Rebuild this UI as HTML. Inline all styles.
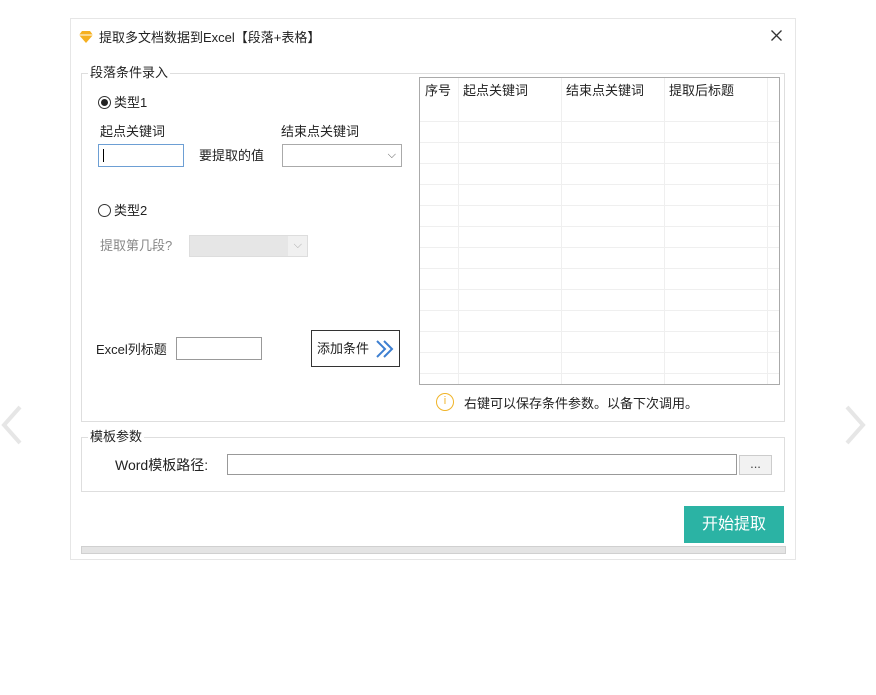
<!DOCTYPE html>
<html><head><meta charset="utf-8"><style>
*{margin:0;padding:0;box-sizing:border-box}
body{width:876px;height:695px;background:#fff;position:relative;overflow:hidden;font-family:"Liberation Sans","Noto Sans CJK SC",sans-serif;font-size:13px;line-height:15px;color:#222}
.a{position:absolute}
.win{left:70px;top:18px;width:726px;height:542px;border:1px solid #e6e6e6;background:#fff}
.grp{border:1px solid #dedede}
.lbl{background:#fff;padding:0 2px;white-space:nowrap}
.inp{border:1px solid #8a8a8a;background:#fff}
.rad{width:13px;height:13px;border:1px solid #333;border-radius:50%}
</style></head><body>
<div class="a win"></div>
<svg class="a" style="left:79px;top:31px" width="14" height="12" viewBox="0 0 14 12"><path d="M3 0h8l3 4-7 8-7-8z" fill="#f5b021"/><path d="M0 4h14" stroke="#fff" stroke-width="1"/></svg>
<div class="a" style="left:99px;top:30px">提取多文档数据到Excel【段落+表格】</div>
<svg class="a" style="left:771px;top:30px" width="11" height="11"><path d="M0.5 0.5l10 10M10.5 0.5l-10 10" stroke="#333" stroke-width="1.3"/></svg>

<div class="a grp" style="left:81px;top:73px;width:704px;height:349px"></div>
<div class="a lbl" style="left:88px;top:65px">段落条件录入</div>

<div class="a rad" style="left:98px;top:96px"><div style="width:7px;height:7px;background:#222;border-radius:50%;margin:2px"></div></div>
<div class="a" style="left:114px;top:95px">类型1</div>
<div class="a" style="left:100px;top:124px">起点关键词</div>
<div class="a" style="left:281px;top:124px">结束点关键词</div>
<div class="a inp" style="left:98px;top:144px;width:86px;height:23px;border-color:#6d9fd4"><div style="width:1px;height:13px;background:#000;margin:4px 0 0 4px"></div></div>
<div class="a" style="left:199px;top:148px">要提取的值</div>
<div class="a inp" style="left:282px;top:144px;width:120px;height:23px;border-color:#aaa"><span style="position:absolute;right:5px;top:3px;font-size:11px;color:#555">⌵</span></div>

<div class="a rad" style="left:98px;top:204px"></div>
<div class="a" style="left:114px;top:203px">类型2</div>
<div class="a" style="left:100px;top:238px;color:#888">提取第几段?</div>
<div class="a" style="left:189px;top:235px;width:119px;height:22px;border:1px solid #ddd;background:#f0f0f0"><div style="position:absolute;left:0;top:0;width:98px;height:20px;background:#e6e6e6"></div><span style="position:absolute;right:5px;top:2px;font-size:11px;color:#aaa">⌵</span></div>

<div class="a" style="left:96px;top:342px">Excel列标题</div>
<div class="a inp" style="left:176px;top:337px;width:86px;height:23px;border-color:#999"></div>
<div class="a" style="left:311px;top:330px;width:89px;height:37px;border:1px solid #333;background:#fff"><span style="position:absolute;left:5px;top:10px">添加条件</span>
<svg style="position:absolute;left:62px;top:7px" width="22" height="22" viewBox="0 0 22 22"><path d="M3 3l8 8-8 8M10 3l8 8-8 8" fill="none" stroke="#3d7fd1" stroke-width="2"/></svg></div>

<div class="a" style="left:419px;top:77px;width:361px;height:308px;border:1px solid #aaa;background:#fff;overflow:hidden">
<svg width="361" height="308" style="position:absolute;left:0;top:0">
<g stroke="#efefef" stroke-width="1">
<line x1="38.5" y1="0" x2="38.5" y2="308"/><line x1="141.5" y1="0" x2="141.5" y2="308"/><line x1="244.5" y1="0" x2="244.5" y2="308"/><line x1="347.5" y1="0" x2="347.5" y2="308"/>
<line x1="0" y1="43.5" x2="361" y2="43.5"/><line x1="0" y1="64.5" x2="361" y2="64.5"/><line x1="0" y1="85.5" x2="361" y2="85.5"/><line x1="0" y1="106.5" x2="361" y2="106.5"/><line x1="0" y1="127.5" x2="361" y2="127.5"/><line x1="0" y1="148.5" x2="361" y2="148.5"/><line x1="0" y1="169.5" x2="361" y2="169.5"/><line x1="0" y1="190.5" x2="361" y2="190.5"/><line x1="0" y1="211.5" x2="361" y2="211.5"/><line x1="0" y1="232.5" x2="361" y2="232.5"/><line x1="0" y1="253.5" x2="361" y2="253.5"/><line x1="0" y1="274.5" x2="361" y2="274.5"/><line x1="0" y1="295.5" x2="361" y2="295.5"/>
</g></svg>
<span style="position:absolute;left:5px;top:5px">序号</span><span style="position:absolute;left:43px;top:5px">起点关键词</span><span style="position:absolute;left:146px;top:5px">结束点关键词</span><span style="position:absolute;left:249px;top:5px">提取后标题</span>
</div>
<div class="a" style="left:436px;top:393px;width:18px;height:18px;border:1.5px solid #f0b429;border-radius:50%;color:#f0b429;font-size:11px;text-align:center;line-height:15px">i</div>
<div class="a" style="left:464px;top:396px">右键可以保存条件参数。以备下次调用。</div>

<div class="a grp" style="left:81px;top:437px;width:704px;height:55px"></div>
<div class="a lbl" style="left:88px;top:429px">模板参数</div>
<div class="a" style="left:115px;top:457px;font-size:14px;line-height:16px">Word模板路径:</div>
<div class="a inp" style="left:227px;top:454px;width:510px;height:21px;border-color:#999"></div>
<div class="a" style="left:739px;top:455px;width:33px;height:20px;border:1px solid #ccc;background:#f2f2f2;text-align:center;line-height:16px;color:#444">...</div>

<div class="a" style="left:684px;top:506px;width:100px;height:37px;background:#2bb3a4;color:#fff;font-size:16px;text-align:center;line-height:37px">开始提取</div>
<div class="a" style="left:81px;top:546px;width:705px;height:8px;background:#e4e4e4;border:1px solid #d0d0d0"></div>

<svg class="a" style="left:0;top:405px" width="24" height="40"><path d="M20 2L4 20l16 18" fill="none" stroke="#e6e6e6" stroke-width="4"/></svg>
<svg class="a" style="left:843px;top:405px" width="24" height="40"><path d="M4 2l16 18L4 38" fill="none" stroke="#e6e6e6" stroke-width="4"/></svg>
</body></html>
